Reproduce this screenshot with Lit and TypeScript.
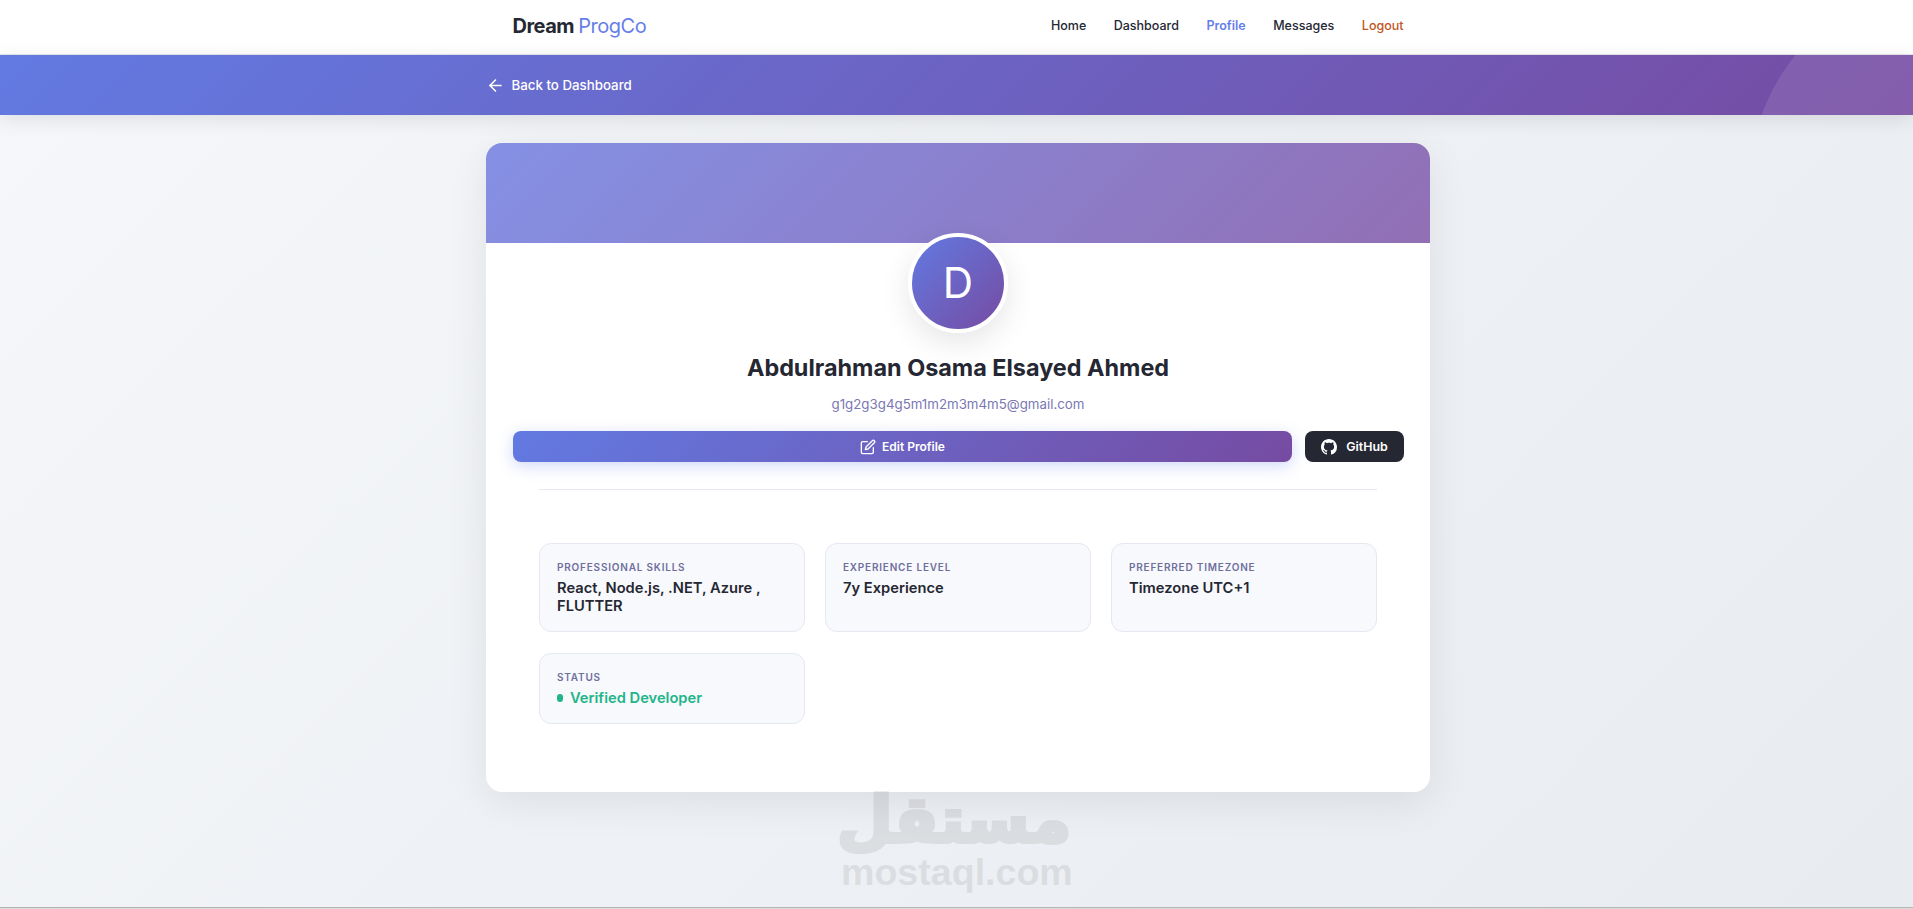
import { LitElement, css, html } from 'lit'
import { customElement } from 'lit/decorators.js'

const details = [
  { label: 'Professional Skills', value: 'React, Node.js, .NET, Azure , FLUTTER' },
  { label: 'Experience Level', value: '7y Experience' },
  { label: 'Preferred Timezone', value: 'Timezone UTC+1' },
]

@customElement('app-root')
export class AppRoot extends LitElement {
  render() {
    return html`
      <nav class="nav">
        <div class="nav-inner">
          <div class="logo">Dream <span>ProgCo</span></div>
          <div class="links">
            <a>Home</a>
            <a>Dashboard</a>
            <a class="active">Profile</a>
            <a>Messages</a>
            <a class="logout">Logout</a>
          </div>
        </div>
      </nav>

      <header class="banner">
        <div class="banner-inner">
          <svg width="19" height="19" viewBox="0 0 24 24" fill="none" stroke="currentColor" stroke-width="2" stroke-linecap="round" stroke-linejoin="round">
            <path d="M19 12H5"></path>
            <path d="M12 19l-7-7 7-7"></path>
          </svg>
          <span>Back to Dashboard</span>
        </div>
      </header>

      <main class="main">
        <section class="card">
          <div class="cover"></div>
          <div class="avatar">D</div>
          <h1 class="name">Abdulrahman Osama Elsayed Ahmed</h1>
          <p class="email">g1g2g3g4g5m1m2m3m4m5@gmail.com</p>
          <div class="actions">
            <button class="edit">
              <svg width="16" height="16" viewBox="0 0 24 24" fill="none" stroke="currentColor" stroke-width="2" stroke-linecap="round" stroke-linejoin="round">
                <path d="M11 4H4a2 2 0 0 0-2 2v14a2 2 0 0 0 2 2h14a2 2 0 0 0 2-2v-7"></path>
                <path d="M18.5 2.5a2.121 2.121 0 0 1 3 3L12 15l-4 1 1-4 9.5-9.5z"></path>
              </svg>
              Edit Profile
            </button>
            <button class="github">
              <svg width="16" height="16" viewBox="0 0 16 16" fill="currentColor">
                <path d="M8 0C3.58 0 0 3.58 0 8c0 3.54 2.29 6.53 5.47 7.59.4.07.55-.17.55-.38 0-.19-.01-.82-.01-1.49-2.01.37-2.53-.49-2.69-.94-.09-.23-.48-.94-.82-1.13-.28-.15-.68-.52-.01-.53.63-.01 1.08.58 1.23.82.72 1.21 1.87.87 2.33.66.07-.52.28-.87.51-1.07-1.78-.2-3.64-.89-3.64-3.95 0-.87.31-1.59.82-2.15-.08-.2-.36-1.02.08-2.12 0 0 .67-.21 2.2.82.64-.18 1.32-.27 2-.27s1.36.09 2 .27c1.53-1.04 2.2-.82 2.2-.82.44 1.1.16 1.92.08 2.12.51.56.82 1.27.82 2.15 0 3.07-1.87 3.75-3.65 3.95.29.25.54.73.54 1.48 0 1.07-.01 1.93-.01 2.2 0 .21.15.46.55.38A8.01 8.01 0 0 0 16 8c0-4.42-3.58-8-8-8z"></path>
              </svg>
              GitHub
            </button>
          </div>
          <hr class="divider" />
          <div class="grid">
            ${details.map(d => html`
              <div class="item">
                <div class="label">${d.label}</div>
                <div class="value">${d.value}</div>
              </div>
            `)}
            <div class="item">
              <div class="label">Status</div>
              <div class="value verified"><i class="dot"></i>Verified Developer</div>
            </div>
          </div>
        </section>
      </main>

      <footer class="page-end"></footer>

      <div class="watermark" aria-hidden="true">
        <div class="wm-ar" lang="ar" dir="rtl">مستقل</div>
        <div class="wm-en">mostaql.com</div>
      </div>
    `
  }

  static styles = css`
    :host {
      display: flex;
      flex-direction: column;
      position: relative;
      min-height: 909px;
      background: linear-gradient(135deg, #f5f7fa 0%, #e8ebf0 100%);
      font-family: Inter, 'Noto Sans', sans-serif;
      color: #252733;
      overflow: hidden;
    }
    .nav, .banner, .main {
      box-sizing: border-box;
      padding-left: 3px;
    }
    .nav {
      height: 55px;
      background: #fff;
      border-bottom: 1px solid #e5e7eb;
    }
    .nav-inner {
      box-sizing: border-box;
      width: 891px;
      height: 100%;
      margin: 0 auto;
      padding-bottom: 3px;
      display: flex;
      align-items: center;
      justify-content: space-between;
    }
    .logo {
      font-size: 20px;
      font-weight: 700;
      letter-spacing: -0.5px;
    }
    .logo span {
      font-weight: 400;
      color: #667eea;
    }
    .links {
      display: flex;
      gap: 27.5px;
      font-size: 12.5px;
      font-weight: 500;
    }
    .links .active {
      color: #667eea;
      font-weight: 600;
    }
    .links .logout {
      color: #c05621;
    }
    .banner {
      height: 60px;
      position: relative;
      overflow: hidden;
      background: linear-gradient(135deg, #627ae2 0%, #764ba2 100%);
      box-shadow: 0 4px 20px rgba(0, 0, 0, 0.1);
      color: #fff;
    }
    .banner::before {
      content: '';
      position: absolute;
      left: 1750px;
      top: -73px;
      width: 400px;
      height: 400px;
      border-radius: 50%;
      background: rgba(255, 255, 255, 0.1);
    }
    .banner-inner {
      width: 944px;
      height: 100%;
      margin: 0 auto;
      display: flex;
      align-items: center;
      gap: 6.5px;
      font-size: 13.3px;
      font-weight: 500;
    }
    .main {
      padding-top: 28px;
      display: flex;
      justify-content: center;
    }
    .card {
      width: 944px;
      box-sizing: border-box;
      padding-bottom: 68px;
      background: #fff;
      border-radius: 16px;
      overflow: hidden;
      box-shadow: 0 10px 40px rgba(0, 0, 0, 0.08);
      display: flex;
      flex-direction: column;
      align-items: center;
    }
    .cover {
      align-self: stretch;
      height: 100px;
      background: linear-gradient(135deg, #6675de 0%, #764ba2 100%);
      opacity: 0.8;
    }
    .avatar {
      width: 92px;
      height: 92px;
      margin-top: -10px;
      border: 4px solid #fff;
      border-radius: 50%;
      background: linear-gradient(135deg, #627ae2 0%, #764ba2 100%);
      box-shadow: 0 10px 30px rgba(0, 0, 0, 0.1);
      color: #fff;
      font-size: 42px;
      line-height: 1;
      display: flex;
      align-items: center;
      justify-content: center;
      position: relative;
    }
    .name {
      margin: 20px 0 0;
      font-size: 23.4px;
      line-height: 30px;
      font-weight: 700;
    }
    .email {
      margin: 10.5px 0 0;
      font-size: 13.3px;
      line-height: 20px;
      color: #7a78b4;
    }
    .actions {
      align-self: stretch;
      margin: 17.5px 26px 0 27px;
      display: flex;
      gap: 13px;
    }
    button {
      height: 31px;
      border: none;
      border-radius: 8px;
      color: #fff;
      font-family: inherit;
      font-size: 12px;
      font-weight: 600;
      display: flex;
      align-items: center;
      justify-content: center;
      gap: 6px;
    }
    .edit {
      flex: 1;
      background: linear-gradient(135deg, #627ae2 0%, #764ba2 100%);
      box-shadow: 0 4px 15px rgba(102, 126, 234, 0.3);
    }
    .github {
      width: 99px;
      background: #252733;
      font-size: 12.4px;
      gap: 9px;
    }
    .divider {
      align-self: stretch;
      margin: 27px 53px 0;
      border: none;
      border-top: 1px solid #e5e8f0;
    }
    .grid {
      align-self: stretch;
      margin: 53px 53px 0;
      display: grid;
      grid-template-columns: repeat(3, 1fr);
      gap: 21px 20px;
    }
    .item {
      padding: 17px 17px 16px;
      background: #f8f9fc;
      border: 1px solid #e5e8f0;
      border-radius: 12px;
    }
    .label {
      font-size: 10px;
      line-height: 12px;
      font-weight: 600;
      letter-spacing: 0.8px;
      text-transform: uppercase;
      color: #6f6f9e;
      margin-bottom: 6px;
    }
    .value {
      font-size: 14.7px;
      line-height: 18px;
      font-weight: 600;
    }
    .verified {
      color: #22b58a;
      display: flex;
      align-items: center;
      gap: 7px;
    }
    .dot {
      width: 6px;
      height: 8px;
      border-radius: 3px;
      background: #22b58a;
    }
    .page-end {
      margin-top: auto;
      height: 2px;
      box-sizing: border-box;
      border-top: 1px solid #b5b5b5;
      background: #dcdcdc;
    }
    .watermark {
      position: absolute;
      left: 841px;
      top: 785px;
      width: 230px;
      text-align: center;
      color: #000;
      opacity: 0.07;
      font-weight: 700;
      pointer-events: none;
    }
    .wm-ar {
      font-family: 'DejaVu Sans', sans-serif;
      font-size: 64px;
      line-height: 70px;
      -webkit-text-stroke: 4px #000;
    }
    .wm-en {
      font-family: 'Liberation Sans', sans-serif;
      font-size: 37.6px;
      line-height: 34px;
    }
  `
}
